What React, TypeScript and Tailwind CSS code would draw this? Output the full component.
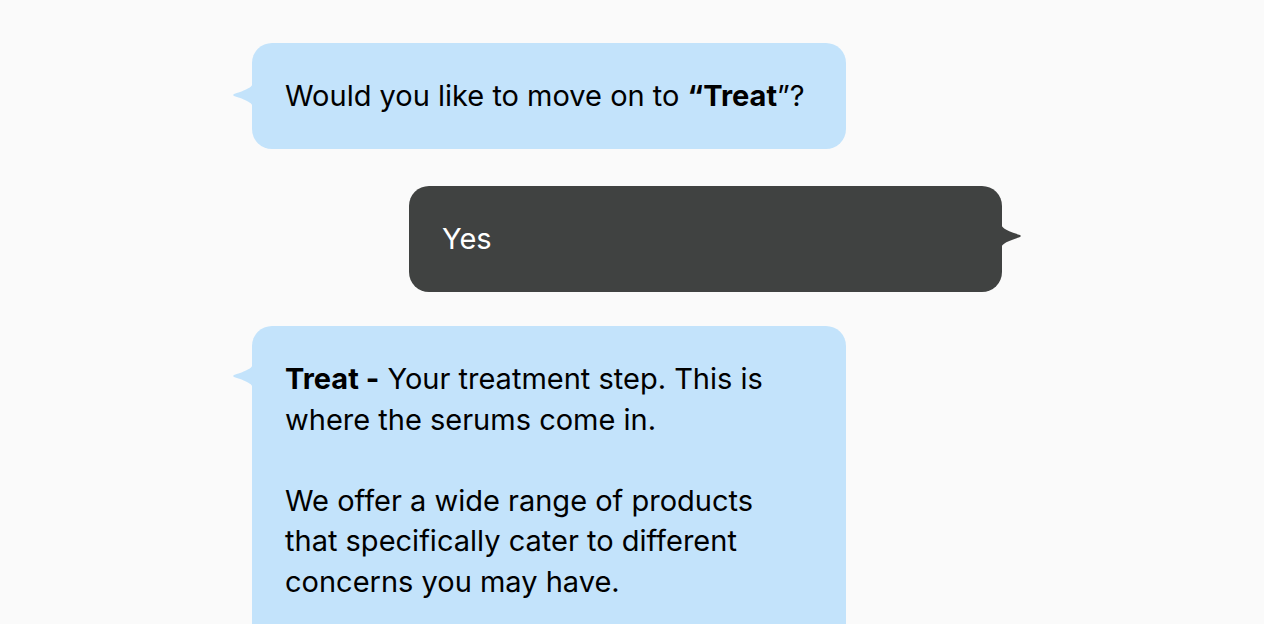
import React from 'react';

const font = { fontFamily: 'Inter, "Noto Sans", sans-serif' };

const tailPath = 'M20 0 C20 4 17 7 1 12 C0 12.4 0 13.6 1 14 C17 19 20 22 20 26 Z';

function TailLeft({ className }: { className: string }) {
  return (
    <svg width="20" height="26" viewBox="0 0 20 26" className={className} fill="#c3e3fb">
      <path d={tailPath} />
    </svg>
  );
}

export default function App() {
  return (
    <div className="min-h-screen bg-[#fafafa] overflow-hidden" style={font}>
      <div className="flex flex-col pt-[43px] pl-[252px] w-[1002px]">
        {/* Bot message */}
        <div className="relative w-[594px] rounded-[20px] bg-[#c3e3fb] px-[33px] py-[33px] text-[29px] leading-[40px] text-black">
          <TailLeft className="absolute left-[-19px] top-[39px]" />
          Would you like to move on to <b>“Treat</b>”?
        </div>

        {/* User reply */}
        <div className="relative self-end mt-[37px] w-[593px] rounded-[20px] bg-[#404241] px-[33px] py-[33px] text-[29px] leading-[40px] text-white">
          <svg
            width="20"
            height="26"
            viewBox="0 0 20 26"
            className="absolute right-[-19px] top-[37px]"
            fill="#404241"
          >
            <path d="M0 0 C0 4 3 7 19 12 C20 12.4 20 13.6 19 14 C3 19 0 22 0 26 Z" />
          </svg>
          Yes
        </div>

        {/* Bot message */}
        <div className="relative mt-[34px] w-[594px] rounded-t-[20px] bg-[#c3e3fb] px-[33px] pt-[33px] pb-[60px] text-[29px] leading-[40.6px] text-black">
          <TailLeft className="absolute left-[-19px] top-[37px]" />
          <p>
            <b>Treat -</b> Your treatment step. This is where the serums come in.
          </p>
          <p className="mt-[40.6px]">
            We offer a wide range of products that specifically cater to different concerns you may have.
          </p>
        </div>
      </div>
    </div>
  );
}
